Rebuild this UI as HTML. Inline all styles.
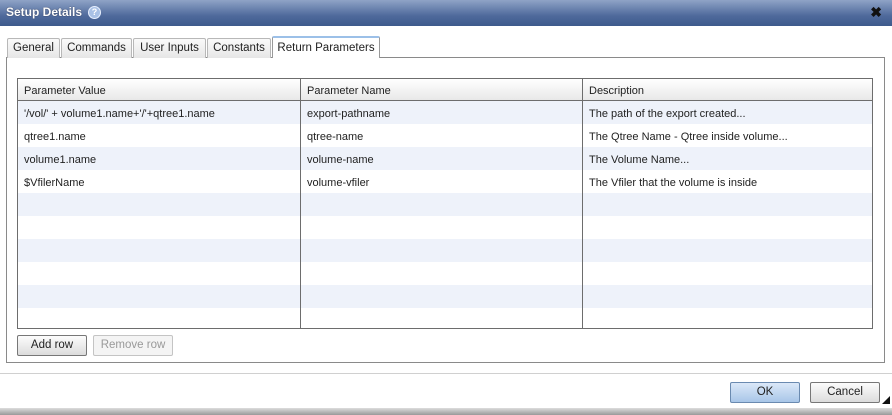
<!DOCTYPE html><html><head><style>
*{margin:0;padding:0;box-sizing:border-box}
body{width:892px;height:415px;background:#fff;font-family:"Liberation Sans",Tahoma,sans-serif;font-size:11px;color:#222;position:relative;overflow:hidden}
.title{position:absolute;left:0;top:0;width:892px;height:26px;background:linear-gradient(#8fa3c6,#4f6a9c 60%,#3e5a8c);}
.title b{position:absolute;left:6px;top:5px;color:#fff;font-size:12px;text-shadow:0 0 1px #223}
.help{position:absolute;left:88px;top:6px;width:13px;height:13px;border-radius:50%;background:#a9c1e6;border:1px solid #e8f0ff;color:#fff;font-size:9px;font-weight:bold;text-align:center;line-height:11px}
.x{position:absolute;right:10px;top:4px;color:#111;font-weight:bold;font-size:14px}
.tab{position:absolute;top:38px;height:20px;border:1px solid #b8b8b8;border-bottom:none;background:linear-gradient(#fafafa,#e6e6e6);padding:3px 0 0;text-align:center;font-size:11.5px;border-radius:2px 2px 0 0}
.tab.a{top:36px;height:22px;background:#fff;border-color:#999;border-top:2px solid #9cc0e8;padding-top:4px;z-index:2}
.panel{position:absolute;left:6px;top:57px;width:879px;height:306px;border:1px solid #8a8a8a}
.grid{position:absolute;left:17px;top:78px;width:856px;height:251px;border:1px solid #6d6d6d;overflow:hidden}
.hd{height:22px;background:linear-gradient(#fff,#e8e8e8);border-bottom:1px solid #6d6d6d;position:relative}
.hd .c{top:1px}
.row{height:23px;position:relative}
.row:nth-child(odd){background:#eef2fa}
.c{position:absolute;top:2px;line-height:22px;padding-left:6px}
.c1{left:0}.c2{left:283px}.c3{left:565px}
.vl{position:absolute;top:0;bottom:0;width:1px;background:#6d6d6d}
.btn{position:absolute;height:21px;border:1px solid #777;border-radius:2px;background:linear-gradient(#fcfcfc,#dcdcdc);text-align:center;line-height:19px;font-size:11.5px}
</style></head><body>
<div class="title"><b>Setup Details</b><div class="help">?</div><div class="x">✖</div></div>
<div class="panel"></div>
<div class="tab" style="left:7px;width:53px">General</div>
<div class="tab" style="left:61px;width:71px">Commands</div>
<div class="tab" style="left:133px;width:73px">User Inputs</div>
<div class="tab" style="left:207px;width:64px">Constants</div>
<div class="tab a" style="left:272px;width:108px">Return Parameters</div>
<div class="grid">
<div class="hd"><span class="c c1">Parameter Value</span><span class="c c2">Parameter Name</span><span class="c c3">Description</span></div>
<div>
<div class="row"><span class="c c1">'/vol/' + volume1.name+'/'+qtree1.name</span><span class="c c2">export-pathname</span><span class="c c3">The path of the export created...</span></div>
<div class="row"><span class="c c1">qtree1.name</span><span class="c c2">qtree-name</span><span class="c c3">The Qtree Name - Qtree inside volume...</span></div>
<div class="row"><span class="c c1">volume1.name</span><span class="c c2">volume-name</span><span class="c c3">The Volume Name...</span></div>
<div class="row"><span class="c c1">$VfilerName</span><span class="c c2">volume-vfiler</span><span class="c c3">The Vfiler that the volume is inside</span></div>
<div class="row"></div><div class="row"></div><div class="row"></div><div class="row"></div><div class="row"></div><div class="row"></div>
</div>
<div class="vl" style="left:282px"></div><div class="vl" style="left:564px"></div>
</div>
<div class="btn" style="left:17px;top:335px;width:70px">Add row</div>
<div class="btn" style="left:93px;top:335px;width:80px;color:#999;border-color:#c4c4c4;background:#f4f4f4">Remove row</div>
<div style="position:absolute;left:0;top:373px;width:892px;height:1px;background:#d0d0d0"></div>
<div class="btn" style="left:730px;top:382px;width:70px;background:linear-gradient(#dbe8f8,#a8c6e8);border-color:#6a8ab0">OK</div>
<div class="btn" style="left:810px;top:382px;width:70px">Cancel</div>
<div style="position:absolute;right:2px;top:396px;width:0;height:0;border-left:8px solid transparent;border-bottom:8px solid #111"></div>
<div style="position:absolute;left:0;top:408px;width:892px;height:7px;background:linear-gradient(#ddd,#999)"></div>
</body></html>
